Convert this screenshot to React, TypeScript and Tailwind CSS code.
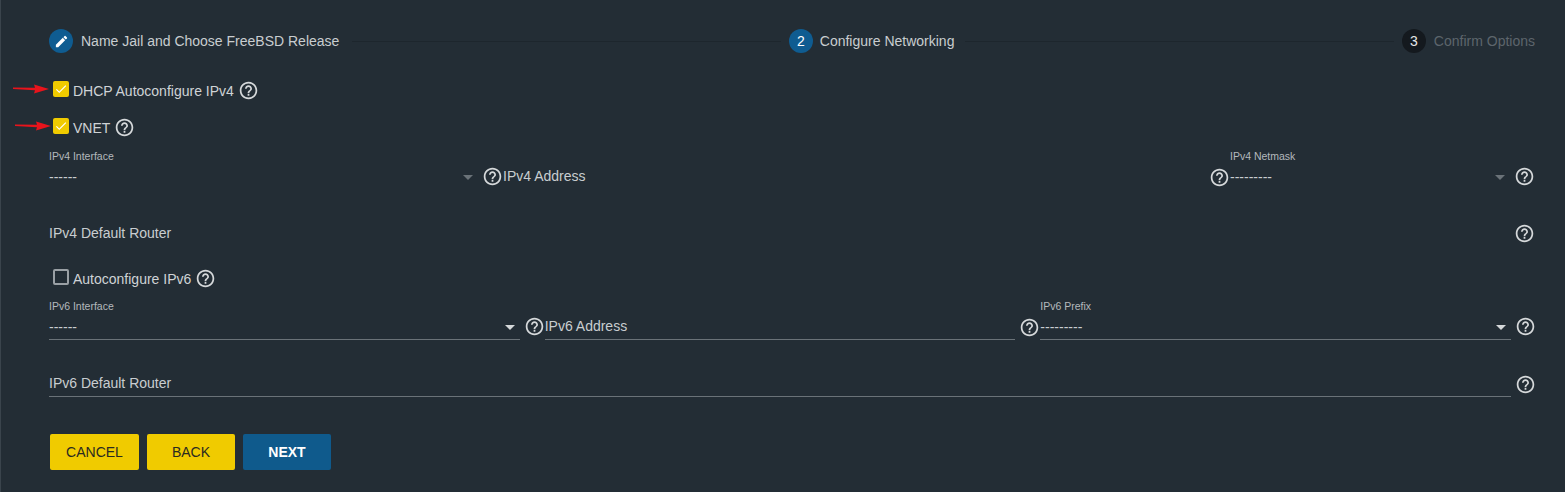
import { MdEdit, MdHelpOutline, MdCheck } from "react-icons/md";

function Help() {
  return (
    <span className="flex w-[25px] shrink-0 items-center justify-center pl-1 text-[#d5d8da]">
      <MdHelpOutline size={21} />
    </span>
  );
}

function Caret({ disabled }: { disabled?: boolean }) {
  return (
    <span
      className={
        "h-0 w-0 border-x-[5px] border-t-[5px] border-x-transparent " +
        (disabled ? "border-t-[#6a7278]" : "border-t-[#d5d8da]")
      }
    />
  );
}

function Arrow({ className }: { className: string }) {
  return (
    <svg className={className} width="36" height="10" viewBox="0 0 36 10">
      <path d="M0 3.4 L22 3.8 L21 0.6 L36 5 L21 9.4 L22 6.2 L0 5 Z" fill="#e8141c" />
    </svg>
  );
}

function CheckRow({ label, checked, arrow }: { label: string; checked?: boolean; arrow?: string }) {
  return (
    <div className="relative flex h-[37px] items-center pl-[53px]">
      {arrow && <Arrow className={arrow} />}
      {checked ? (
        <span className="mb-1 flex h-4 w-4 items-center justify-center rounded-[2px] bg-[#f0cb00] text-white">
          <MdCheck size={14} />
        </span>
      ) : (
        <span className="mb-1 h-4 w-4 rounded-[2px] border-2 border-[#9aa0a5]" />
      )}
      <span className="ml-1 mt-[2px] text-[14px] text-[#cfd3d6]">{label}</span>
      <Help />
    </div>
  );
}

function SelectField({ label, value, disabled }: { label: string; value: string; disabled?: boolean }) {
  return (
    <div className={"min-w-0 flex-1 " + (disabled ? "" : "border-b border-[#6a7278]")}>
      <div className="mt-[5px] h-3 text-[10.5px] leading-3 text-[#b4b9bd]">{label}</div>
      <div className="mb-1 mt-[7px] flex h-4 items-center justify-between pr-[5px] text-[14px] text-[#c9cdd0]">
        <span>{value}</span>
        <Caret disabled={disabled} />
      </div>
    </div>
  );
}

function TextField({ label, disabled }: { label: string; disabled?: boolean }) {
  return (
    <div className={"flex h-[26px] min-w-0 flex-1 items-center text-[14px] text-[#c9cdd0] " + (disabled ? "" : "border-b border-[#6a7278]")}>
      {label}
    </div>
  );
}

function Step({ n, label, state, gap = "gap-2" }: { n: React.ReactNode; label: string; state: "done" | "active" | "todo"; gap?: string }) {
  return (
    <div className={"flex shrink-0 items-center " + gap}>
      <span
        className={
          "flex h-6 w-6 items-center justify-center rounded-full text-[14px] " +
          (state === "todo" ? "bg-[#14191e] text-[#e4e6e8]" : "bg-[#0f5c91] text-white")
        }
      >
        {n}
      </span>
      <span className={"text-[14px] " + (state === "todo" ? "text-[#5d656c]" : "text-[#c9cdd0]")}>{label}</span>
    </div>
  );
}

export default function App() {
  return (
    <div className="h-[492px] w-[1565px] overflow-hidden border-l border-[#3a444c] bg-[#232d35] font-['Liberation_Sans',Arial,sans-serif]">
      {/* Stepper */}
      <div className="ml-[48px] mr-[30px] mt-[29px] flex h-6 items-center">
        <Step n={<MdEdit size={15} />} label="Name Jail and Choose FreeBSD Release" state="done" />
        <div className="ml-[13px] mr-2 h-px flex-1 bg-[#1d262d]" />
        <Step n="2" label="Configure Networking" state="active" gap="gap-[7px]" />
        <div className="ml-[11px] mr-2 h-px flex-1 bg-[#1d262d]" />
        <Step n="3" label="Confirm Options" state="todo" />
      </div>

      <div className="-ml-px mt-[19px] h-[73px]">
        <CheckRow label="DHCP Autoconfigure IPv4" checked arrow="absolute left-[13px] top-[12px]" />
        <CheckRow label="VNET" checked arrow="absolute left-[15px] top-[12px]" />
      </div>

      {/* IPv4 */}
      <div className="ml-[48px] mr-[30px]">
        <div className="flex h-[45px]">
          <div className="flex w-[454px]">
            <SelectField label="IPv4 Interface" value="------" disabled />
            <div className="mt-[18px] flex h-[27px]">
              <Help />
            </div>
          </div>
          <div className="flex w-[727px] pt-[18px]">
            <TextField label="IPv4 Address" disabled />
            <div className="mt-px flex h-[27px]">
              <Help />
            </div>
          </div>
          <div className="flex w-[305px]">
            <SelectField label="IPv4 Netmask" value="---------" disabled />
            <div className="mt-[18px] flex h-[27px]">
              <Help />
            </div>
          </div>
        </div>
        <div className="mt-[30px] flex h-[26px]">
          <TextField label="IPv4 Default Router" disabled />
          <Help />
        </div>
      </div>

      <div className="-ml-px mt-[3px] h-[46px] pt-[11px]">
        <CheckRow label="Autoconfigure IPv6" />
      </div>

      {/* IPv6 */}
      <div className="ml-[48px] mr-[29px]">
        <div className="grid h-[45px] grid-cols-3">
          <div className="flex">
            <SelectField label="IPv6 Interface" value="------" />
            <div className="mt-[18px] flex h-[27px]">
              <Help />
            </div>
          </div>
          <div className="flex pt-[19px]">
            <TextField label="IPv6 Address" />
            <Help />
          </div>
          <div className="flex">
            <SelectField label="IPv6 Prefix" value="---------" />
            <div className="mt-[18px] flex h-[27px]">
              <Help />
            </div>
          </div>
        </div>
        <div className="mt-[31px] flex h-[26px]">
          <TextField label="IPv6 Default Router" />
          <Help />
        </div>

        <div className="ml-px mt-[37px] flex gap-2">
          <button className="h-9 w-[89px] rounded-[2px] bg-[#f0cb00] text-[14px] text-[#2a2a20]">CANCEL</button>
          <button className="h-9 w-[88px] rounded-[2px] bg-[#f0cb00] text-[14px] text-[#2a2a20]">BACK</button>
          <button className="h-9 w-[88px] rounded-[2px] bg-[#0f5a8c] text-[14px] font-bold text-white">NEXT</button>
        </div>
      </div>
    </div>
  );
}
